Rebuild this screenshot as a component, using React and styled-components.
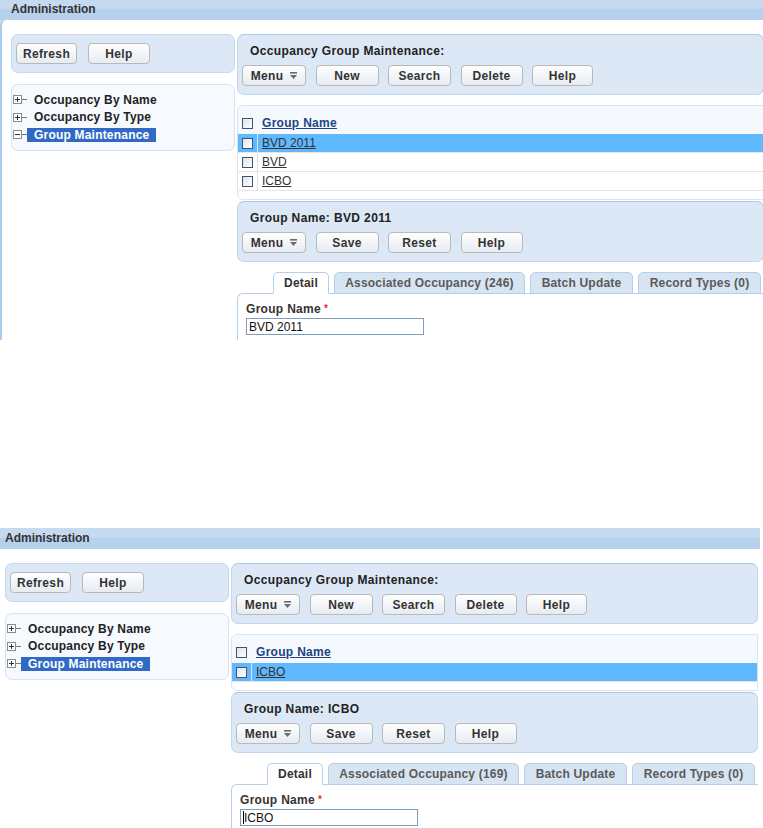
import React from 'react';
import styled, { createGlobalStyle } from 'styled-components';

const Global = createGlobalStyle`
  html, body { margin: 0; padding: 0; background: #fff; overflow: hidden; }
  body { font-family: "Liberation Sans", Arial, sans-serif; font-size: 12px; color: #333; }
`;

const Page = styled.div`
  width: 763px;
  height: 828px;
  overflow: hidden;
`;

const Frame = styled.div`
  width: 766px;
  height: ${p => p.$h}px;
  margin-left: ${p => p.$dx}px;
  margin-top: ${p => p.$dy}px;
  overflow: hidden;
  display: flex;
  flex-direction: column;
  background: #c3d9ef;
`;

const Header = styled.div`
  flex: none;
  height: 21px;
  box-sizing: border-box;
  padding-left: 11px;
  line-height: 21px;
  font-weight: bold;
  font-size: 12px;
  color: #333;
  background: linear-gradient(#c6daef 0, #c6daef 45%, #b6d1ec 46%, #b6d1ec 100%);
`;

const Body = styled.div`
  flex: 1;
  display: flex;
  align-items: flex-start;
  gap: 2px;
  padding: 14px 0 0 9px;
  background: #fff;
  border-left: 2px solid #aacdee;
  border-top-left-radius: 6px;
`;

const LeftCol = styled.div`
  width: 224px;
  flex: none;
  display: flex;
  flex-direction: column;
  gap: 11px;
`;

const RightCol = styled.div`
  width: 527px;
  flex: none;
  display: flex;
  flex-direction: column;
`;

const SideBar = styled.div`
  height: 39px;
  box-sizing: border-box;
  display: flex;
  gap: 11px;
  padding: 8px 4px;
  background: #dce8f5;
  border: 1px solid #c4d8ee;
  border-radius: 7px;
`;

const Btn = styled.button`
  width: ${p => p.$w || 63}px;
  height: 21px;
  box-sizing: border-box;
  padding: 0;
  display: inline-flex;
  align-items: center;
  justify-content: center;
  gap: 7px;
  border: 1px solid #b9b9b9;
  border-radius: 4px;
  background: linear-gradient(#fefefe, #e7ecf2);
  font-family: "Liberation Sans", Arial, sans-serif;
  font-weight: bold;
  font-size: 12px;
  letter-spacing: 0.35px;
  color: #333;
`;

const Tree = styled.div`
  height: 67px;
  box-sizing: border-box;
  padding: 6px 0 0 1px;
  background: #f6f9fd;
  border: 1px solid #d7e3f0;
  border-radius: 7px;
`;

const TreeRow = styled.div`
  height: 17.5px;
  display: flex;
  align-items: center;
`;

const TreeLabel = styled.span`
  height: 14px;
  line-height: 14px;
  padding: 0 7px;
  font-weight: bold;
  font-size: 12px;
  letter-spacing: 0.2px;
  color: ${p => (p.$sel ? '#fff' : '#222')};
  background: ${p => (p.$sel ? '#316ac5' : 'transparent')};
`;

const Toolbar = styled.div`
  height: 61px;
  box-sizing: border-box;
  padding: 9px 0 0 4px;
  background: #dce8f5;
  border: 1px solid #c2d7ee;
  border-top-color: #a8c8ec;
  border-radius: 7px;
  margin-top: ${p => p.$mt || 0}px;
`;

const ToolTitle = styled.div`
  padding-left: 8px;
  line-height: 14px;
  font-weight: bold;
  font-size: 12px;
  letter-spacing: 0.38px;
  color: #222;
`;

const BtnRow = styled.div`
  display: flex;
  gap: 9.5px;
  margin-top: 7px;
`;

const List = styled.div`
  margin-top: 10px;
  padding-bottom: 8px;
  background: #fff;
  border: 1px solid #d9e5f1;
  border-radius: 6px 0 0 6px;
`;

const ListHead = styled.div`
  height: 28px;
  box-sizing: border-box;
  display: flex;
  align-items: center;
  padding-top: 6px;
  background: #f5f9fd;
  border-radius: 6px 0 0 0;
`;

const ListRow = styled.div`
  height: 19px;
  box-sizing: border-box;
  display: flex;
  align-items: center;
  background: ${p => (p.$sel ? '#60b8fe' : '#fff')};
  border-bottom: 1px solid #e6e6e6;
`;

const CheckCell = styled.div`
  width: 20px;
  height: ${p => (p.$line ? '100%' : 'auto')};
  box-sizing: border-box;
  flex: none;
  display: flex;
  align-items: center;
  padding-left: 4px;
  border-right: 1px solid ${p => (p.$line ? '#e2e2e2' : 'transparent')};
`;

const Check = styled.span`
  width: 11px;
  height: 11px;
  box-sizing: border-box;
  border: 1px solid #3a5675;
  background: linear-gradient(135deg, #e2e2e2, #ffffff);
`;

const HeadLink = styled.span`
  padding-left: 4px;
  font-weight: bold;
  font-size: 12px;
  letter-spacing: 0.3px;
  color: #1d4384;
  text-decoration: underline;
  line-height: 14px;
`;

const RowLink = styled.span`
  padding-left: 4px;
  font-size: 12px;
  color: #333;
  text-decoration: underline;
  line-height: 14px;
`;

const TabRow = styled.div`
  margin-top: 10px;
  display: flex;
  gap: 5px;
  padding-left: 36px;
  position: relative;
  z-index: 1;
`;

const Tab = styled.div`
  width: ${p => p.$w}px;
  height: 22px;
  box-sizing: border-box;
  text-align: center;
  line-height: 21px;
  font-weight: bold;
  font-size: 12px;
  letter-spacing: 0.2px;
  color: ${p => (p.$active ? '#333' : '#5a5a5a')};
  background: ${p => (p.$active ? '#fff' : '#d7e4f2')};
  border: 1px solid #b5cee9;
  border-bottom-color: ${p => (p.$active ? '#fff' : '#b5cee9')};
  border-radius: 5px 5px 0 0;
`;

const Content = styled.div`
  margin-top: -1px;
  height: 80px;
  padding: 8px 0 0 8px;
  border-top: 1px solid #b5cee9;
  border-left: 1px solid #b5cee9;
  border-top-left-radius: 6px;
  background: #fff;
`;

const FieldLabel = styled.div`
  line-height: 14px;
  font-weight: bold;
  font-size: 12px;
  letter-spacing: 0.3px;
  color: #333;
`;

const Req = styled.span`
  color: #e2321d;
  font-size: 10px;
  margin-left: 3px;
  vertical-align: top;
`;

const Field = styled.div`
  margin-top: 2px;
  width: 178px;
  height: 17px;
  box-sizing: border-box;
  padding: 0 2px;
  display: flex;
  align-items: center;
  border: 1px solid #7f9db9;
  font-size: 12px;
  color: #111;
  background: #fff;
`;

const Caret = styled.span`
  width: 1px;
  height: 13px;
  background: #000;
`;

const MenuIcon = () => (
  <svg width="7" height="7" viewBox="0 0 7 7">
    <rect x="0" y="0" width="7" height="1.6" fill="#6b6b6b" />
    <path d="M0 3 L7 3 L3.5 7 Z" fill="#6b6b6b" />
  </svg>
);

const TreeIcon = ({ open }) => (
  <svg width="14" height="9" viewBox="0 0 14 9">
    <rect x="0.5" y="0.5" width="8" height="8" fill="#fff" stroke="#8c8c8c" />
    <line x1="2" y1="4.5" x2="7" y2="4.5" stroke="#333" />
    {!open && <line x1="4.5" y1="2" x2="4.5" y2="7" stroke="#333" />}
    <line x1="9" y1="4.5" x2="14" y2="4.5" stroke="#777" />
  </svg>
);

function Screen({ rows, selected, assoc, groupOpen, caret, dx, dy, h }) {
  return (
    <Frame $dx={dx} $dy={dy} $h={h}>
      <Header>Administration</Header>
      <Body>
        <LeftCol>
          <SideBar>
            <Btn $w={61}>Refresh</Btn>
            <Btn $w={62}>Help</Btn>
          </SideBar>
          <Tree>
            <TreeRow><TreeIcon /><TreeLabel>Occupancy By Name</TreeLabel></TreeRow>
            <TreeRow><TreeIcon /><TreeLabel>Occupancy By Type</TreeLabel></TreeRow>
            <TreeRow><TreeIcon open={groupOpen} /><TreeLabel $sel>Group Maintenance</TreeLabel></TreeRow>
          </Tree>
        </LeftCol>
        <RightCol>
          <Toolbar>
            <ToolTitle>Occupancy Group Maintenance:</ToolTitle>
            <BtnRow>
              <Btn $w={64}>Menu <MenuIcon /></Btn>
              <Btn>New</Btn>
              <Btn>Search</Btn>
              <Btn $w={62}>Delete</Btn>
              <Btn $w={61}>Help</Btn>
            </BtnRow>
          </Toolbar>
          <List>
            <ListHead>
              <CheckCell><Check /></CheckCell>
              <HeadLink>Group Name</HeadLink>
            </ListHead>
            {rows.map(r => (
              <ListRow key={r} $sel={r === selected}>
                <CheckCell $line><Check /></CheckCell>
                <RowLink>{r}</RowLink>
              </ListRow>
            ))}
          </List>
          <Toolbar $mt={1}>
            <ToolTitle>Group Name: {selected}</ToolTitle>
            <BtnRow>
              <Btn $w={64}>Menu <MenuIcon /></Btn>
              <Btn>Save</Btn>
              <Btn>Reset</Btn>
              <Btn $w={62}>Help</Btn>
            </BtnRow>
          </Toolbar>
          <TabRow>
            <Tab $w={56} $active>Detail</Tab>
            <Tab $w={191}>Associated Occupancy ({assoc})</Tab>
            <Tab $w={103}>Batch Update</Tab>
            <Tab $w={123}>Record Types (0)</Tab>
          </TabRow>
          <Content>
            <FieldLabel>Group Name<Req>*</Req></FieldLabel>
            <Field>{caret && <Caret />}{selected}</Field>
          </Content>
        </RightCol>
      </Body>
    </Frame>
  );
}

export default function App() {
  return (
    <Page>
      <Global />
      <Screen rows={['BVD 2011', 'BVD', 'ICBO']} selected="BVD 2011" assoc={246} groupOpen dx={0} dy={-1} h={341} />
      <Screen rows={['ICBO']} selected="ICBO" assoc={169} caret dx={-6} dy={188} h={300} />
    </Page>
  );
}
